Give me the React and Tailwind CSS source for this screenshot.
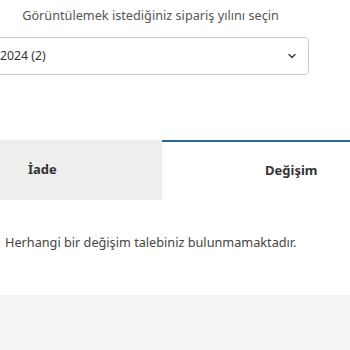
import { ChevronDown } from 'lucide-react';

const App = () => {
    return (
        <div className="w-[350px] h-[350px] overflow-hidden bg-white flex flex-col" style={{ fontFamily: '"Noto Sans", "Open Sans", sans-serif' }}>
            {/* Year select */}
            <div className="-ml-3 w-[321px] pt-[5px]">
                <p className="text-center text-[12.7px] leading-[20px] text-[#555] pl-[4px]">Görüntülemek istediğiniz sipariş yılını seçin</p>
                <div className="mt-[12px] h-[38px] border border-[#c8c8c8] rounded-[4px] flex items-center justify-between pl-[11px] pr-[10px]">
                    <span className="text-[12.3px] text-[#333]">2024 (2)</span>
                    <ChevronDown className="w-3 h-3 text-[#444]" strokeWidth={3} />
                </div>
            </div>

            {/* Tabs */}
            <div className="mt-[65px] flex h-[60px]">
                <div className="w-[162px] bg-[#eeeeee] flex items-center pl-[28px]">
                    <span className="text-[13px] font-bold text-[#333]">İade</span>
                </div>
                <div className="flex-1 border-t-2 border-[#2b6791] flex items-center pl-[103px]">
                    <span className="text-[13px] font-bold text-[#333]">Değişim</span>
                </div>
            </div>

            <p className="mt-[31px] pl-[5px] text-[12.7px] leading-[22px] text-[#444]">Herhangi bir değişim talebiniz bulunmamaktadır.</p>

            <div className="mt-[42px] flex-1 bg-[#f4f4f4]"></div>
        </div>
    );
};

export default App;
